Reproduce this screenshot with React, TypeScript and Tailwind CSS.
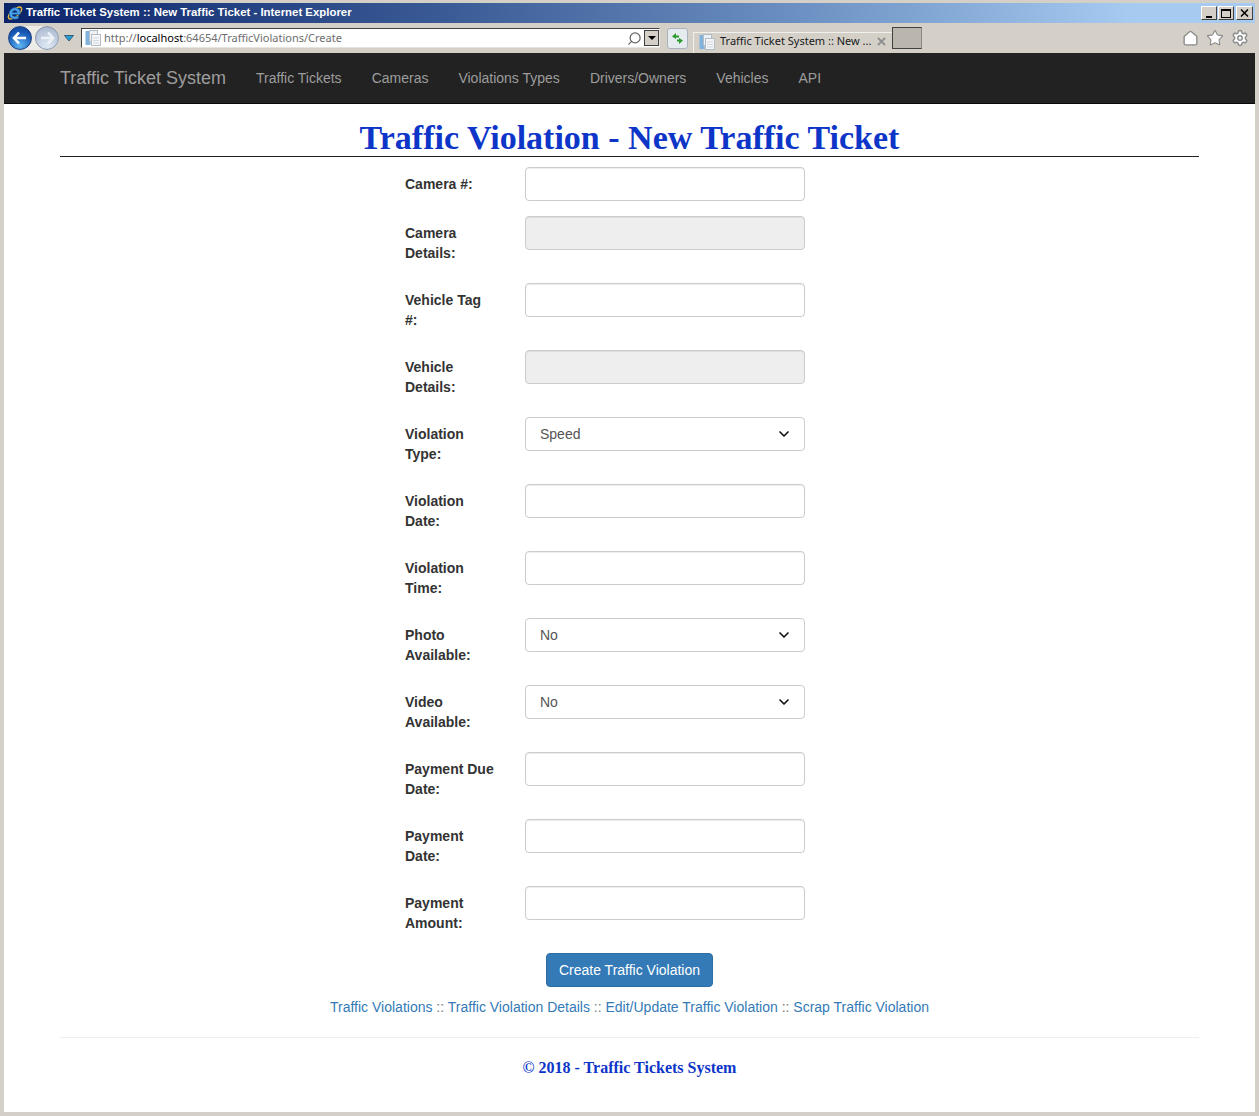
import { ChevronDown, Home, Search, Settings, Star } from "lucide-react";

const sans = "font-['Liberation_Sans',Arial,sans-serif]";
const ui = "font-['Noto_Sans',sans-serif]";

const navLinks = ["Traffic Tickets", "Cameras", "Violations Types", "Drivers/Owners", "Vehicles", "API"];

type Field = { label: string; kind: "input" | "disabled" | "select"; value?: string };

const fields: Field[] = [
  { label: "Camera #:", kind: "input" },
  { label: "Camera Details:", kind: "disabled" },
  { label: "Vehicle Tag #:", kind: "input" },
  { label: "Vehicle Details:", kind: "disabled" },
  { label: "Violation Type:", kind: "select", value: "Speed" },
  { label: "Violation Date:", kind: "input" },
  { label: "Violation Time:", kind: "input" },
  { label: "Photo Available:", kind: "select", value: "No" },
  { label: "Video Available:", kind: "select", value: "No" },
  { label: "Payment Due Date:", kind: "input" },
  { label: "Payment Date:", kind: "input" },
  { label: "Payment Amount:", kind: "input" },
];

const PageIcon = () => (
  <svg width="16" height="16" viewBox="0 0 16 16">
    <rect x="0.5" y="1" width="5" height="14" fill="#7fb2dd" />
    <rect x="4.5" y="0.5" width="8" height="11" fill="#eef1f4" stroke="#b4bcc6" />
    <rect x="6.5" y="4.5" width="9" height="11" fill="#f4f6f8" stroke="#b4bcc6" />
    <path d="M8 8h6M8 10.5h6M8 13h6" stroke="#d3d8de" />
  </svg>
);

const IeLogo = () => (
  <svg width="18" height="18" viewBox="0 0 18 18" className="shrink-0">
    <ellipse cx="9" cy="9" rx="8.2" ry="3.6" transform="rotate(-40 9 9)" fill="none" stroke="#e8b93c" strokeWidth="1.4" />
    <path d="M14 10.5H6.3c.2 2.2 3.7 3 6.2.9v2.8c-4 2.2-9.4.5-9.2-4.9C3.4 4.4 9 2.300 12.500 4.800c1.500 1.100 2 3.300 1.500 5.700zM6.400 8.400h4.700c0-2.700-4.400-2.700-4.700 0z" fill="#4aa3e8" stroke="#14539c" strokeWidth="0.6" />
  </svg>
);

const RoundButton = ({ back }: { back?: boolean }) => (
  <div
    className={
      back
        ? "flex h-[24px] w-[24px] items-center justify-center rounded-full border border-[#1b3f80] bg-[radial-gradient(circle_at_50%_85%,#5fb4f2,#1658b4_65%,#123f8c)]"
        : "flex h-[24px] w-[24px] items-center justify-center rounded-full border border-[#8b98ab] bg-[radial-gradient(circle_at_50%_85%,#dfe8f4,#b6c4d8_70%,#98a8c0)]"
    }
  >
    <svg width="16" height="14" viewBox="0 0 16 14" className={back ? "" : "rotate-180"}>
      <path d="M7 1.500 2 7l5 5.500M2.500 7H14" fill="none" stroke={back ? "#fff" : "#eef2f7"} strokeWidth="2.600" />
    </svg>
  </div>
);

const WinButton = ({ children, w = "w-[16px]" }: { children: React.ReactNode; w?: string }) => (
  <div
    className={`flex h-[14px] ${w} items-center justify-center border border-t-white border-l-white border-r-[#404040] border-b-[#404040] bg-[#d4d0c8]`}
  >
    {children}
  </div>
);

const WindowChrome = () => (
  <div>
    <div className="flex h-[20px] items-center justify-between bg-[linear-gradient(90deg,#0a246a_0%,#3a5a95_35%,#6f93c4_65%,#a6caf0_90%)] pl-[2px] pr-[2px]">
      <div className="flex items-center gap-[2px]">
        <IeLogo />
        <span className={`${sans} whitespace-nowrap text-[11.4px] font-bold leading-none text-white`}>
          Traffic Ticket System :: New Traffic Ticket - Internet Explorer
        </span>
      </div>
      <div className="flex items-center gap-[1px]">
        <WinButton>
          <span className="mt-[7px] h-[2px] w-[6px] bg-black" />
        </WinButton>
        <WinButton>
          <span className="h-[9px] w-[10px] border border-t-2 border-black" />
        </WinButton>
        <WinButton w="w-[17px] ml-[1px]">
          <svg width="9" height="8" viewBox="0 0 9 8">
            <path d="M1 0.500 8 7.500M8 0.500 1 7.500" stroke="#000" strokeWidth="1.500" />
          </svg>
        </WinButton>
      </div>
    </div>
    <div className="flex h-[30px] items-center bg-[#d4d0c8] pl-[4px] pr-[6px]">
      <div className="flex items-center gap-[3px] rounded-full bg-[#eeece7] p-[0px]">
        <RoundButton back />
        <RoundButton />
      </div>
      <svg width="10" height="7" viewBox="0 0 10 7" className="ml-[5px]">
        <path d="M0.500 0.500h9L5 6z" fill="#2a9fd6" stroke="#123a5c" strokeWidth="0.700" />
      </svg>
      <div className="ml-[7px] flex h-[20px] w-[579px] items-center border border-[#e6e4df] border-t-[#404040] border-l-[#404040] bg-white pl-[3px]">
        <PageIcon />
        <span className={`${ui} ml-[3px] whitespace-nowrap text-[11px] text-[#6d6d6d]`}>
          http://<span className="text-black">localhost</span>:64654/TrafficViolations/Create
        </span>
        <Search size={15} strokeWidth={2} className="ml-auto mr-[2px] -scale-x-100 text-[#666]" />
        <div className="flex h-[16px] w-[15px] items-center justify-center border border-[#404040] bg-[#d4d0c8]">
          <span className="h-0 w-0 border-x-[4px] border-t-[4px] border-x-transparent border-t-black" />
        </div>
      </div>
      <div className="ml-[7px] flex h-[21px] w-[21px] items-center justify-center rounded-[3px] border border-[#a9b2bd] bg-[#e6ebf0]">
        <svg width="15" height="13" viewBox="0 0 15 13">
          <path d="M6 1 2 4.500 6 7V5.500h3V3.500H6zM9 12l4-3.500L9 6v1.500H7v2h2z" fill="#2f9a2c" />
        </svg>
      </div>
      <div className="ml-[5px] flex h-[21px] w-[199px] items-center self-end border-l border-t border-[#f2f0ec] pl-[5px] pb-[3px]">
        <PageIcon />
        <span className={`${ui} ml-[5px] whitespace-nowrap text-[11px] text-[#1a1a1a]`}>
          Traffic Ticket System :: New ...
        </span>
        <svg width="9" height="9" viewBox="0 0 9 9" className="ml-[6px]">
          <path d="M1 1l7 7M8 1 1 8" stroke="#8f8f8f" strokeWidth="1.800" />
        </svg>
      </div>
      <div className="h-[22px] w-[30px] border border-t-[#404040] border-l-[#404040] border-r-[#8a8780] border-b-[#404040] bg-[#bab6ae]" />
      <div className="ml-auto flex items-center gap-[7px]">
        <Home size={17} strokeWidth={2} fill="#fff" className="text-[#8c8c8c]" />
        <Star size={18} strokeWidth={1.500} fill="#fff" className="text-[#8c8c8c]" />
        <Settings size={18} strokeWidth={2} fill="#fff" className="text-[#8c8c8c]" />
      </div>
    </div>
  </div>
);

const Navbar = () => (
  <nav className={`${sans} flex h-[51px] items-center border-b border-[#080808] bg-[#222] pl-[41px] text-[#9d9d9d]`}>
    <span className="whitespace-nowrap px-[15px] text-[18px]">Traffic Ticket System</span>
    {navLinks.map((link) => (
      <a key={link} href="#" className="whitespace-nowrap px-[15px] text-[14px]">
        {link}
      </a>
    ))}
  </nav>
);

const FieldRow = ({ field }: { field: Field }) => (
  <div className="mb-[15px] flex">
    <label className="w-[90px] shrink-0 pt-[7px] pb-[5px] text-[14px] font-bold leading-[20px] text-[#333]">
      {field.label}
    </label>
    <div className="relative ml-[30px] w-[280px]">
      {field.kind === "select" ? (
        <>
          <select
            defaultValue={field.value}
            className="h-[34px] w-full appearance-none rounded-[4px] border border-[#ccc] bg-white px-[14px] text-[14px] text-[#555]"
          >
            <option>{field.value}</option>
          </select>
          <ChevronDown size={16} strokeWidth={2.500} className="pointer-events-none absolute right-[13px] top-[9px] text-[#111]" />
        </>
      ) : (
        <input
          disabled={field.kind === "disabled"}
          className="block h-[34px] w-full rounded-[4px] border border-[#ccc] bg-white shadow-[inset_0_1px_1px_rgba(0,0,0,0.075)] disabled:bg-[#eee]"
        />
      )}
    </div>
  </div>
);

export default function App() {
  return (
    <div className={`${sans} flex h-[1116px] w-[1259px] flex-col overflow-hidden border-t-[3px] border-x-[4px] border-b-[4px] border-[#d4d0c8] bg-white`}>
      <WindowChrome />
      <Navbar />
      <main className="mx-[56px] flex-1">
        <h1 className="mt-[16px] h-[37px] border-b border-[#222] text-center font-['Liberation_Serif',Georgia,serif] text-[34px] font-bold leading-[36px] text-[#0d35c8]">
          Traffic Violation - New Traffic Ticket
        </h1>
        <form className="ml-[345px] mt-[10px] w-[400px]">
          {fields.map((field) => (
            <FieldRow key={field.label} field={field} />
          ))}
        </form>
        <div className="text-center text-[14px] leading-[20px]">
          <button className="h-[34px] rounded-[4px] border border-[#2e6da4] bg-[#337ab7] px-[12px] text-white">
            Create Traffic Violation
          </button>
          <p className="mt-[10px] text-[#777]">
            <a href="#" className="text-[#337ab7]">Traffic Violations</a> ::{" "}
            <a href="#" className="text-[#337ab7]">Traffic Violation Details</a> ::{" "}
            <a href="#" className="text-[#337ab7]">Edit/Update Traffic Violation</a> ::{" "}
            <a href="#" className="text-[#337ab7]">Scrap Traffic Violation</a>
          </p>
        </div>
        <hr className="mt-[20px] border-[#eee]" />
        <p className="mt-[20px] text-center font-['Liberation_Serif',Georgia,serif] text-[16px] font-bold leading-[20px] text-[#0d35c8]">
          © 2018 - Traffic Tickets System
        </p>
      </main>
    </div>
  );
}
